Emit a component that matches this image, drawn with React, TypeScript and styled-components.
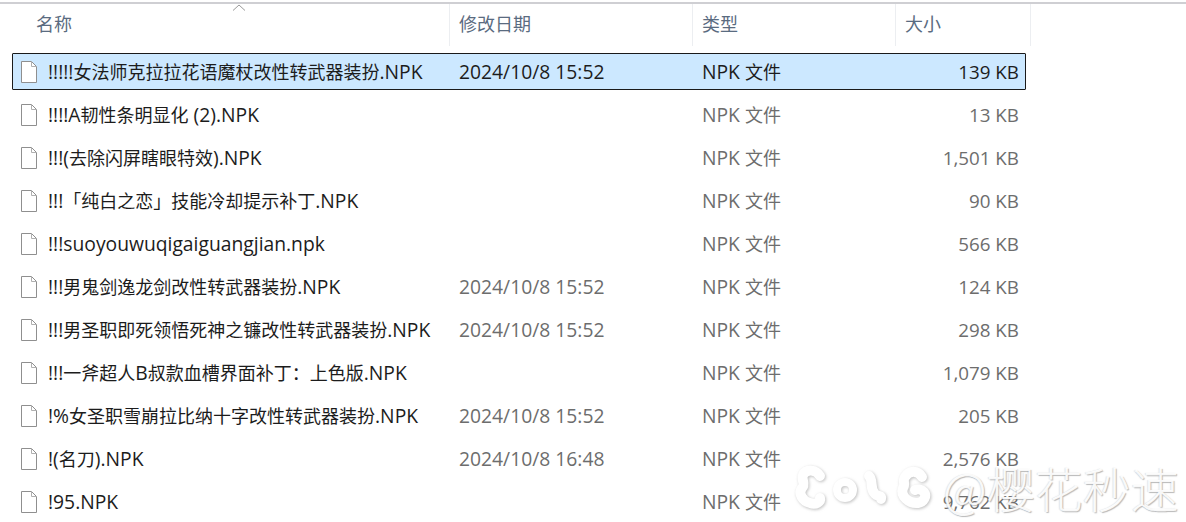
import React from 'react';
import styled, { createGlobalStyle } from 'styled-components';

interface FileItem {
    name: string;
    date?: string;
    size: string;
    selected?: boolean;
}

const files: FileItem[] = [
    { name: '!!!!!女法师克拉拉花语魔杖改性转武器装扮.NPK', date: '2024/10/8 15:52', size: '139 KB', selected: true },
    { name: '!!!!A韧性条明显化 (2).NPK', size: '13 KB' },
    { name: '!!!(去除闪屏瞎眼特效).NPK', size: '1,501 KB' },
    { name: '!!!「纯白之恋」技能冷却提示补丁.NPK', size: '90 KB' },
    { name: '!!!suoyouwuqigaiguangjian.npk', size: '566 KB' },
    { name: '!!!男鬼剑逸龙剑改性转武器装扮.NPK', date: '2024/10/8 15:52', size: '124 KB' },
    { name: '!!!男圣职即死领悟死神之镰改性转武器装扮.NPK', date: '2024/10/8 15:52', size: '298 KB' },
    { name: '!!!一斧超人B叔款血槽界面补丁：上色版.NPK', size: '1,079 KB' },
    { name: '!%女圣职雪崩拉比纳十字改性转武器装扮.NPK', date: '2024/10/8 15:52', size: '205 KB' },
    { name: '!(名刀).NPK', date: '2024/10/8 16:48', size: '2,576 KB' },
    { name: '!95.NPK', size: '9,762 KB' },
];

const GlobalStyle = createGlobalStyle`
    html, body {
        margin: 0;
        padding: 0;
        background: #ffffff;
        overflow: hidden;
    }
    body {
        font-family: "Open Sans", "Noto Sans CJK SC", sans-serif;
    }
`;

const Page = styled.div`
    position: relative;
    width: 1186px;
    height: 522px;
    overflow: hidden;
    padding-top: 2px;
    box-sizing: border-box;
    background: #ffffff;
`;

const Header = styled.div`
    display: grid;
    grid-template-columns: 450px 243px 203px 135px;
    height: 42px;
    border-top: 2px solid #cfcfd3;
`;

const HeaderCell = styled.div<{ $first?: boolean }>`
    position: relative;
    display: flex;
    align-items: center;
    height: 42px;
    padding: 0 0 4px ${(p) => (p.$first ? '36px' : '9px')};
    box-sizing: border-box;
    border-right: 1px solid #eceef1;
    font-size: 18px;
    color: #5a6b80;
`;

const SortArrow = styled.svg`
    position: absolute;
    left: 232px;
    top: 0;
`;

const List = styled.div`
    display: flex;
    flex-direction: column;
    margin-top: 7px;
    padding-left: 12px;
`;

const Row = styled.div<{ $selected?: boolean }>`
    display: grid;
    grid-template-columns: 437px 243px 203px 1fr;
    align-items: center;
    box-sizing: border-box;
    width: 1014px;
    height: 37px;
    margin-bottom: 6px;
    flex: none;
    font-size: 19.3px;
    color: ${(p) => (p.$selected ? '#1c1c1c' : '#6d6d6d')};
    background: ${(p) => (p.$selected ? '#cce8ff' : 'transparent')};
    border: 1px solid ${(p) => (p.$selected ? '#1a1a1a' : 'transparent')};
    border-radius: 1px;
`;

const NameCell = styled.div`
    display: flex;
    align-items: center;
    gap: 11px;
    padding-left: 8px;
    white-space: pre;
    color: #1c1c1c;
`;

const DateCell = styled.div`
    padding-left: 9px;
    white-space: nowrap;
`;

const TypeCell = styled.div`
    padding-left: 9px;
    white-space: nowrap;
`;

const SizeCell = styled.div`
    padding-right: 6px;
    font-size: 18.8px;
    text-align: right;
    white-space: nowrap;
`;

const Cjk = styled.span`
    font-size: 18px;
`;

const Watermark = styled.div`
    position: absolute;
    left: 790px;
    top: 455px;
    display: flex;
    align-items: center;
    gap: 3px;
`;

const WatermarkText = styled.span`
    font-family: "Noto Sans CJK SC", sans-serif;
    font-size: 48px;
    line-height: 62px;
    margin-top: -4px;
    font-weight: 300;
    white-space: nowrap;
    color: rgba(255, 255, 255, 0.92);
    text-shadow: 1px 1px 1px rgba(130, 130, 130, 0.55), -1px 0 1px rgba(190, 190, 190, 0.4);
`;

const LogoMark = styled.svg`
    flex: none;
    filter: drop-shadow(1px 1px 1.5px rgba(140, 140, 140, 0.55));
`;

// chinese runs are smaller than the latin ones in the original
function Mixed({ text }: { text: string }) {
    return (
        <span>
            {text.split(/([^\x00-\x7f]+)/).map((part, i) =>
                i % 2 === 1 ? <Cjk key={i}>{part}</Cjk> : part
            )}
        </span>
    );
}

function FileIcon() {
    return (
        <svg width="16" height="22" viewBox="0 0 16 22" fill="none">
            <path d="M0.5 0.5H10.5L15.5 5.5V21.5H0.5Z" fill="#ffffff" stroke="#8f8f8f" />
            <path d="M10.5 0.5V5.5H15.5" stroke="#b0b0b0" />
        </svg>
    );
}

function ColgLogo() {
    return (
        <LogoMark width="150" height="67" viewBox="0 0 150 67" fill="none" stroke="#ffffff" strokeWidth="10" strokeLinecap="round">
            <path d="M30 21C26 14 16 14 13 20C11 25 16 29 12 33C8 38 12 46 20 48C26 50 31 47 30 43" />
            <circle cx="55" cy="35" r="8" strokeWidth="8" />
            <path d="M79 21C84 26 79 33 85 39C88 42 92 40 91 44" />
            <path d="M132 22C128 15 119 15 115 22C112 26 116 29 113 33C110 41 119 49 128 48C134 47 137 41 134 37C131 34 127 34 125 35" />
        </LogoMark>
    );
}

export default function App() {
    return (
        <Page>
            <GlobalStyle />
            <Header>
                <HeaderCell $first>
                    名称
                    <SortArrow width="14" height="8" viewBox="0 0 14 8" fill="none">
                        <path d="M1 6.5L7 1L13 6.5" stroke="#9a9a9a" />
                    </SortArrow>
                </HeaderCell>
                <HeaderCell>修改日期</HeaderCell>
                <HeaderCell>类型</HeaderCell>
                <HeaderCell>大小</HeaderCell>
            </Header>
            <List>
                {files.map((file) => (
                    <Row key={file.name} $selected={file.selected}>
                        <NameCell>
                            <FileIcon />
                            <Mixed text={file.name} />
                        </NameCell>
                        <DateCell>{file.date}</DateCell>
                        <TypeCell>
                            <Mixed text="NPK 文件" />
                        </TypeCell>
                        <SizeCell>{file.size}</SizeCell>
                    </Row>
                ))}
            </List>
            <Watermark>
                <ColgLogo />
                <WatermarkText>@樱花秒速</WatermarkText>
            </Watermark>
        </Page>
    );
}
